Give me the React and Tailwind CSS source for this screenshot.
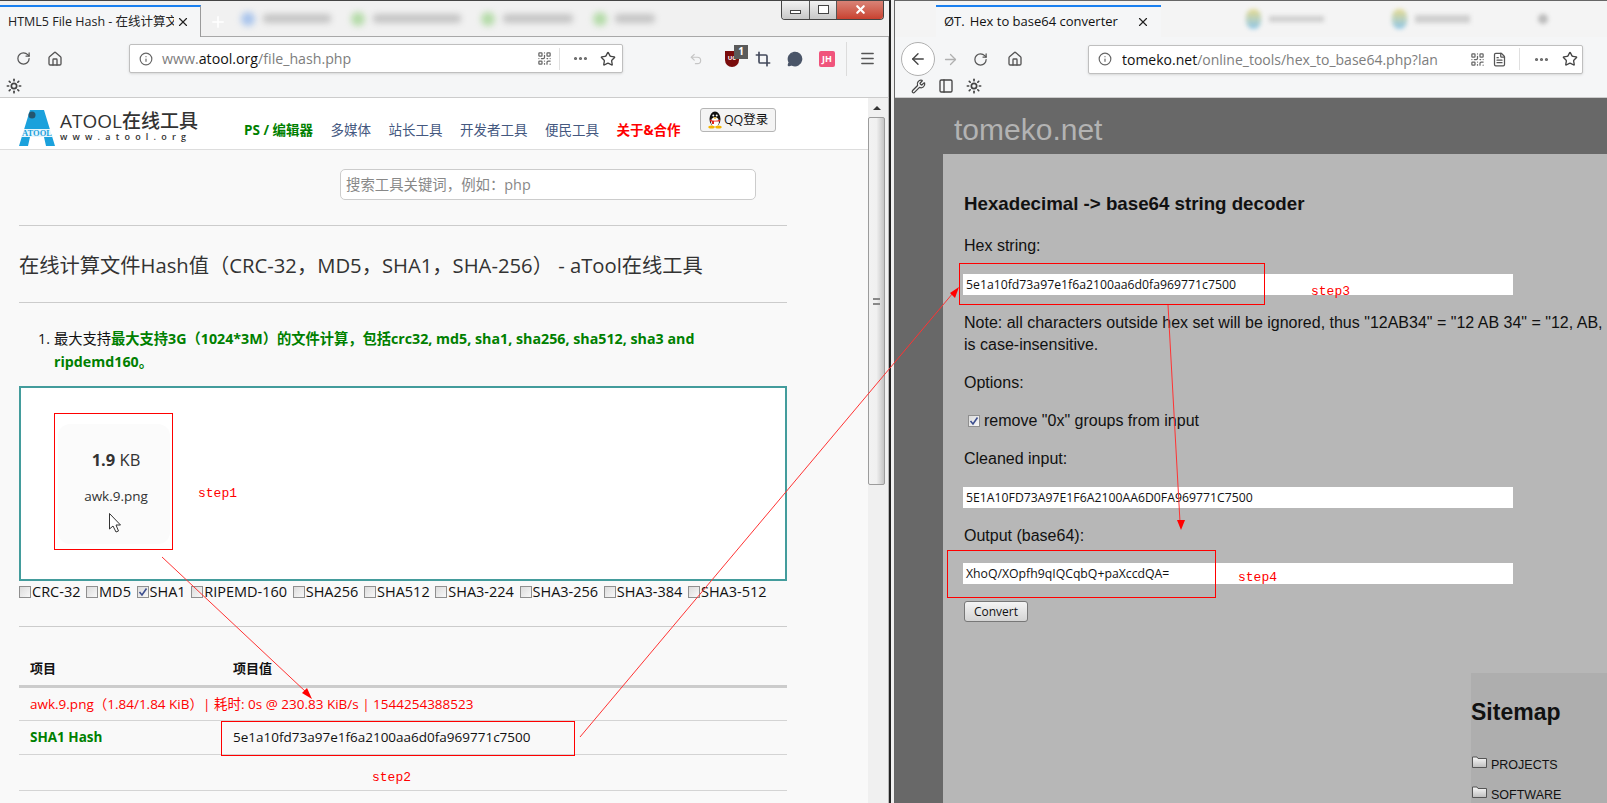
import React from 'react';
import { RotateCw, Home, Info, Star, MoreHorizontal, Sun, Crop, MessageCircle, Menu, ArrowLeft, ArrowRight, Wrench, PanelLeft, FileText, QrCode, Undo2, X, Plus } from 'lucide-react';

function Box({ checked }) {
  return (
    <span className="w-[12px] h-[12px] mr-px border border-[#8f8f8f] bg-gradient-to-br from-[#dcdcdc] to-[#f8f8f8] flex items-center justify-center shrink-0">
      {checked && (
        <svg width="10" height="10" viewBox="0 0 10 10"><path d="M1.5 5 L4 8 L8.5 1.5" fill="none" stroke="#3d4f8f" strokeWidth="1.6" /></svg>
      )}
    </span>
  );
}

function Check({ label, checked }) {
  return (
    <span className="flex items-center mr-[5.6px]">
      <Box checked={checked} />
      {label}
    </span>
  );
}

function BlurTab({ color, w }) {
  return (
    <div className="flex items-center gap-2 blur-[3px] mr-5">
      <span className={`w-[14px] h-[14px] rounded-full ${color}`}></span>
      <span className="h-[9px] bg-[#c4c4c4] rounded-sm" style={{ width: w }}></span>
    </div>
  );
}

function Logo() {
  return (
    <div className="flex items-start h-[51px] pt-[12px]">
      <svg width="36" height="36" viewBox="0 0 36 36">
        <path d="M11 0 H25 L36 36 H27 L25 27 H11 L9 36 H0 Z" fill="#1ba1dc" />
        <circle cx="13" cy="5" r="3.5" fill="#24566f" />
        <rect x="3" y="19" width="30" height="8" fill="#fff" opacity="0.9" />
        <text x="18" y="26" textAnchor="middle" fontSize="8.5" fontWeight="700" fontFamily="Liberation Serif, serif" fill="#1ba1dc">ATOOL</text>
      </svg>
      <div className="ml-[5px] flex flex-col">
        <span className="text-[19px] leading-[22px] text-[#333] font-medium">ATOOL在线工具</span>
        <span className="text-[9px] leading-[10px] text-[#333] tracking-[5.2px] font-semibold">www.atool.org</span>
      </div>
    </div>
  );
}

function Penguin() {
  return (
    <svg width="16" height="18" viewBox="0 0 16 18">
      <ellipse cx="8" cy="8" rx="5.5" ry="7.5" fill="#111" />
      <ellipse cx="8" cy="11" rx="4" ry="4.8" fill="#fff" />
      <circle cx="6.3" cy="4.5" r="1" fill="#fff" />
      <circle cx="9.7" cy="4.5" r="1" fill="#fff" />
      <path d="M6 6.4 H10 L8 8 Z" fill="#f5b400" />
      <path d="M3 8.6 Q8 11 13 8.6 V10.4 H7 V13 H5 V10.4 H3 Z" fill="#e3241b" />
      <ellipse cx="4.5" cy="16" rx="3.2" ry="1.6" fill="#f5b400" />
      <ellipse cx="11.5" cy="16" rx="3.2" ry="1.6" fill="#f5b400" />
    </svg>
  );
}

function LeftWindow() {
  return (
    <div className="w-[891px] h-[803px] shrink-0 flex flex-col border-t border-[#444] overflow-hidden border-r-2 border-r-[#222]">
      {/* tab strip */}
      <div className="h-[36px] flex shrink-0 bg-[#f1f1f1] border-b border-[#a8a8a8]">
        <div className="w-[201px] mt-[4px] bg-[#f5f6f7] border-t-2 border-[#1a80f0] border-r border-r-[#9a9a9a] flex items-center pl-2 pr-[10px] -mb-px">
          <span className="text-[12.5px] text-[#222] w-[166px] whitespace-nowrap overflow-hidden">HTML5 File Hash - 在线计算文</span>
          <X size={14} strokeWidth={2} className="text-[#222] ml-auto" />
        </div>
        <Plus size={18} className="text-white ml-[8px] mt-[12px]" />
        <div className="flex items-center ml-[14px]">
          <BlurTab color="bg-[#a9c4ec]" w={68} />
          <BlurTab color="bg-[#b4dba8]" w={88} />
          <BlurTab color="bg-[#b4dba8]" w={70} />
          <BlurTab color="bg-[#b4dba8]" w={40} />
        </div>
        <div className="ml-auto mr-[5px] -mt-px h-[20px] w-[103px] flex border border-t-0 border-[#444] rounded-b-[4px] overflow-hidden shrink-0">
          <div className="w-[28px] bg-gradient-to-b from-[#f5f5f5] to-[#c8c8c8] flex items-center justify-center border-r border-[#555]">
            <span className="w-[11px] h-[4px] mt-1 bg-white border border-[#444] block"></span>
          </div>
          <div className="w-[27px] bg-gradient-to-b from-[#f5f5f5] to-[#c8c8c8] flex items-center justify-center border-r border-[#555]">
            <span className="w-[11px] h-[9px] bg-white border border-[#444] block"></span>
          </div>
          <div className="flex-1 bg-gradient-to-b from-[#d9867a] to-[#c8402f] flex items-center justify-center">
            <X size={13} strokeWidth={4} className="text-white" />
          </div>
        </div>
      </div>
      {/* toolbar */}
      <div className="h-[61px] shrink-0 bg-[#f5f6f7] border-b border-[#cccccc] flex flex-col pr-[6px] border-r border-r-[#b8b8b8]">
        <div className="flex items-center h-[36px] pt-[7px]">
          <RotateCw size={15} strokeWidth={2} className="text-[#555] ml-[16px]" />
          <Home size={16} strokeWidth={2} className="text-[#555] ml-[16px]" />
          <div className="ml-[66px] w-[494px] h-[29px] bg-white border border-[#bfbfbf] rounded-[2px] flex items-center shadow-sm">
            <Info size={14} className="text-[#666] ml-[9px]" />
            <span className="text-[14.2px] ml-[9px] text-[#7d7d7d] flex-1">www.<span className="text-[#111]">atool.org</span>/file_hash.php</span>
            <QrCode size={15} className="text-[#666]" />
            <span className="w-px h-[22px] bg-[#e0e0e0] ml-[7px]"></span>
            <MoreHorizontal size={17} strokeWidth={2.5} className="text-[#666] ml-[12px]" />
            <Star size={16} strokeWidth={2} className="text-[#444] ml-[11px] mr-[6px]" />
          </div>
          <Undo2 size={14} className="text-[#c5c5c5] ml-[66px]" />
          <div className="relative ml-[22px] w-[14px] h-[16px] bg-[#7a0c0c] rounded-b-[7px] text-[6px] text-white flex items-center justify-center font-bold">
            UC
            <span className="absolute -top-[6px] left-[9px] w-[14px] h-[14px] bg-[#5a5a5a] text-white text-[10px] flex items-center justify-center">1</span>
          </div>
          <Crop size={16} strokeWidth={2.5} className="text-[#434a5c] ml-[16px]" />
          <MessageCircle size={16} fill="#4a5568" className="text-[#4a5568] ml-[16px]" />
          <span className="ml-[16px] w-[16px] h-[16px] bg-[#f0547c] rounded-[2px] text-white text-[9px] font-bold flex items-center justify-center">JH</span>
          <span className="w-px h-[34px] bg-[#dcdcdc] ml-[11px]"></span>
          <Menu size={17} className="text-[#555] ml-[12px]" />
        </div>
        <div className="flex-1 flex items-center pl-[6px] pt-[2px]">
          <Sun size={16} strokeWidth={2.5} className="text-[#444]" />
        </div>
      </div>
      {/* page */}
      <div className="flex-1 flex min-h-0 pr-[5px] border-r border-r-[#b8b8b8]">
        <div className="w-[868px] shrink-0 bg-[#f9f9f9] flex flex-col">
          <div className="h-[52px] shrink-0 bg-white border-b border-[#ddd] flex pl-[19px]">
            <Logo />
            <nav className="flex items-center gap-[17.5px] ml-[46px] h-[51px] pt-[14px] text-[13.5px] text-[#44587f] whitespace-nowrap">
              <span className="font-bold text-[#008000]">PS / 编辑器</span>
              <span>多媒体</span>
              <span>站长工具</span>
              <span>开发者工具</span>
              <span>便民工具</span>
              <span className="font-bold text-[#ff0000]">关于&amp;合作</span>
            </nav>
            <div className="ml-[19px] mt-[10px] w-[76px] h-[24px] bg-[#f4f4f4] border border-[#b5b5b5] rounded-[3px] flex items-center justify-center gap-px text-[12.5px] text-[#111] shrink-0">
              <Penguin />QQ登录
            </div>
          </div>
          <div className="ml-[19px] w-[768px] flex flex-col">
            <div className="ml-[321px] mt-[19px] w-[416px] h-[31px] bg-white border border-[#cccccc] rounded-[5px] flex items-center pl-[5px] text-[14.4px] text-[#888]">搜索工具关键词，例如：php</div>
            <div className="mt-[25px] border-t border-[#cccccc]"></div>
            <h1 className="h-[76px] pt-[3px] flex items-center text-[20.25px] text-[#333] font-normal whitespace-nowrap">在线计算文件Hash值（CRC-32，MD5，SHA1，SHA-256） - aTool在线工具</h1>
            <div className="border-t border-[#cccccc]"></div>
            <div className="mt-[24px] ml-[19px] pl-[16px] h-[59px] relative text-[14.25px] leading-[23px] font-bold text-[#008000] whitespace-nowrap">
              <span className="absolute left-0 top-0 text-[#111] font-normal">1.</span>
              <span className="text-[#111] font-normal">最大支持</span>最大支持3G（1024*3M）的文件计算，包括crc32, md5, sha1, sha256, sha512, sha3 and<br />ripdemd160。
            </div>
            <div className="h-[195px] bg-white border-2 border-[#439c9c] pl-[37px] pt-[36px]">
              <div className="w-[112px] h-[120px] bg-[#fbfbfb] rounded-[12px] flex flex-col items-center pt-[25px] pl-[4px]">
                <div className="text-[16.5px] leading-[22px] text-[#333]"><b>1.9</b> KB</div>
                <div className="text-[13.5px] leading-[18px] text-[#333] mt-[16px]">awk.9.png</div>
              </div>
            </div>
            <div className="flex items-center h-[22px] text-[14.5px] text-[#111] whitespace-nowrap">
              <Check label="CRC-32" />
              <Check label="MD5" />
              <Check label="SHA1" checked />
              <Check label="RIPEMD-160" />
              <Check label="SHA256" />
              <Check label="SHA512" />
              <Check label="SHA3-224" />
              <Check label="SHA3-256" />
              <Check label="SHA3-384" />
              <Check label="SHA3-512" />
            </div>
            <div className="mt-[23px] border-t border-[#cccccc]"></div>
            <div className="h-[51px] flex items-end pb-[7px] text-[13px] font-bold text-[#111] border-b-[3px] border-[#cccccc] box-content">
              <span className="ml-[11px] w-[203px]">项目</span>
              <span>项目值</span>
            </div>
            <div className="h-[32px] flex items-center pl-[11px] text-[13.5px] text-[#ff0000] border-b border-[#d4d4d4] box-content whitespace-nowrap">awk.9.png（1.84/1.84 KiB）| 耗时: 0s @ 230.83 KiB/s | 1544254388523</div>
            <div className="h-[33px] flex items-center text-[13.5px] border-b border-[#d4d4d4] box-content">
              <span className="ml-[11px] w-[203px] font-bold text-[#008000]">SHA1 Hash</span>
              <span className="text-[#111]">5e1a10fd73a97e1f6a2100aa6d0fa969771c7500</span>
            </div>
            <div className="h-[35px] border-b border-[#d4d4d4] box-content"></div>
          </div>
        </div>
        <div className="w-[17px] shrink-0 bg-[#f0f0f0] flex flex-col">
          <div className="h-[19px] flex items-center justify-center shrink-0">
            <span className="w-0 h-0 border-x-[4px] border-x-transparent border-b-[4px] border-b-[#333]"></span>
          </div>
          <div className="h-[368px] bg-gradient-to-r from-[#f2f2f2] via-[#f0f0f0] to-[#c4c4c4] border border-[#9c9c9c] rounded-[2px] flex items-center justify-center">
            <span className="w-[7px] h-[7px] border-y-2 border-[#888]"></span>
          </div>
        </div>
      </div>
    </div>
  );
}

function HexInput({ children, className }) {
  return (
    <div className={`w-[550px] h-[21px] bg-white flex items-center pl-[3px] text-[12.25px] text-[#111] font-['Open_Sans',sans-serif] ${className}`}>{children}</div>
  );
}

function RightWindow() {
  return (
    <div className="flex-1 min-w-0 h-[803px] flex flex-col border-t border-[#666] ml-[3px] border-l border-l-[#666] overflow-hidden font-['Liberation_Sans','Noto_Sans_CJK_SC',sans-serif]">
      <div className="h-[36px] shrink-0 flex bg-[#f4f4f4]">
        <div className="ml-[41px] mt-[4px] w-[225px] bg-[#f5f6f7] border-t-2 border-[#1a80f0] flex items-center pl-2 pr-[11px] font-['Open_Sans',sans-serif]">
          <span className="text-[13px] text-[#111] whitespace-nowrap">ØT.<span className="ml-[5px]">Hex to base64 converter</span></span>
          <X size={14} strokeWidth={2} className="text-[#222] ml-auto" />
        </div>
        <div className="flex items-center ml-[85px] blur-[2px] gap-2">
          <span className="w-[15px] h-[20px] rounded-full bg-gradient-to-b from-[#e5d98a] to-[#8cc5e8]"></span>
          <span className="w-[55px] h-[6px] bg-[#cfcfcf]"></span>
          <span className="ml-[60px] w-[15px] h-[20px] rounded-full bg-gradient-to-b from-[#e5d98a] to-[#8cc5e8]"></span>
          <span className="w-[55px] h-[8px] bg-[#cfcfcf]"></span>
          <span className="ml-[60px] w-[10px] h-[10px] rounded-full bg-[#bbb]"></span>
        </div>
      </div>
      <div className="h-[61px] shrink-0 bg-[#f5f6f7] border-b border-[#cccccc] flex flex-col font-['Open_Sans',sans-serif]">
        <div className="flex items-center h-[38px] pl-[6px] pt-[6px]">
          <span className="w-[34px] h-[34px] rounded-full border border-[#b0b0b0] bg-white flex items-center justify-center shrink-0">
            <ArrowLeft size={18} strokeWidth={1.8} className="text-[#444]" />
          </span>
          <ArrowRight size={17} strokeWidth={1.8} className="text-[#b0b0b0] ml-[7px]" />
          <RotateCw size={15} strokeWidth={2} className="text-[#555] ml-[14px]" />
          <Home size={16} strokeWidth={2} className="text-[#555] ml-[19px]" />
          <div className="ml-[65px] w-[495px] h-[29px] bg-white border border-[#bfbfbf] rounded-[2px] flex items-center shadow-sm shrink-0">
            <Info size={14} className="text-[#666] ml-[9px]" />
            <span className="text-[14px] ml-[10px] text-[#7d7d7d] w-[322px] overflow-hidden whitespace-nowrap"><span className="text-[#111]">tomeko.net</span>/online_tools/hex_to_base64.php?lan</span>
            <QrCode size={15} className="text-[#666] ml-[26px]" />
            <FileText size={15} className="text-[#555] ml-[7px]" />
            <span className="w-px h-[22px] bg-[#e0e0e0] ml-[12px]"></span>
            <MoreHorizontal size={17} strokeWidth={2.5} className="text-[#666] ml-[13px]" />
            <Star size={16} strokeWidth={2} className="text-[#444] ml-[12px]" />
          </div>
        </div>
        <div className="flex-1 flex items-center pl-[16px] gap-[12px]">
          <Wrench size={15} strokeWidth={2} className="text-[#444]" />
          <PanelLeft size={16} strokeWidth={2} className="text-[#444]" />
          <Sun size={16} strokeWidth={2.5} className="text-[#444]" />
        </div>
      </div>
      <div className="flex-1 min-h-0 bg-[#686868] flex flex-col">
        <div className="h-[56px] shrink-0 pl-[59px] pt-[14px] text-[30px] leading-[36px] text-[#b3b3b3]">tomeko.net</div>
        <div className="flex-1 ml-[48px] bg-[#b7b7b7] pl-[21px] pt-[39px] text-[16px] leading-[22px] text-[#111] flex flex-col overflow-hidden">
          <h2 className="text-[18.72px] font-bold leading-[22px]">Hexadecimal -&gt; base64 string decoder</h2>
          <p className="mt-[20px]">Hex string:</p>
          <HexInput className="mt-[17px] -ml-px">5e1a10fd73a97e1f6a2100aa6d0fa969771c7500</HexInput>
          <p className="mt-[17px] whitespace-nowrap">Note: all characters outside hex set will be ignored, thus "12AB34" = "12 AB 34" = "12, AB, 34"</p>
          <p>is case-insensitive.</p>
          <p className="mt-[16px]">Options:</p>
          <p className="mt-[16px] flex items-center ml-[4px]"><Box checked /><span className="ml-[3px]">remove "0x" groups from input</span></p>
          <p className="mt-[16px]">Cleaned input:</p>
          <HexInput className="mt-[17px] -ml-px">5E1A10FD73A97E1F6A2100AA6D0FA969771C7500</HexInput>
          <p className="mt-[17px]">Output (base64):</p>
          <HexInput className="mt-[16px] -ml-px">XhoQ/XOpfh9qIQCqbQ+paXccdQA=</HexInput>
          <div className="mt-[17px] w-[64px] h-[21px] bg-gradient-to-b from-[#f4f4f4] to-[#d4d4d4] border border-[#777] rounded-[3px] flex items-center justify-center text-[12px] font-['Open_Sans',sans-serif]">Convert</div>
          <div className="mt-[51px] self-end w-[136px] flex-1 bg-[#aeaeae] text-[12.5px] leading-[16px]">
            <div className="text-[23px] leading-[26px] font-bold mt-[26px]">Sitemap</div>
            <div className="flex items-end mt-[31px] ml-[1px]"><Folder /><span className="ml-[4px] -mb-[5px]">PROJECTS</span></div>
            <div className="flex items-end mt-[18px] ml-[1px]"><Folder /><span className="ml-[4px] -mb-[5px]">SOFTWARE</span></div>
          </div>
        </div>
      </div>
    </div>
  );
}

function Folder() {
  return (
    <svg width="15" height="12" viewBox="0 0 15 12">
      <defs>
        <linearGradient id="fg" x1="0" y1="0" x2="0" y2="1"><stop offset="0" stopColor="#fafafa" /><stop offset="1" stopColor="#bdbdbd" /></linearGradient>
      </defs>
      <path d="M0.5 11.5 V1 H5 L6 2.5 H14.5 V11.5 Z" fill="url(#fg)" stroke="#555" />
    </svg>
  );
}

function Rect({ className }) {
  return <div className={`absolute border border-[#ff0000] pointer-events-none ${className}`}></div>;
}

function Step({ className, children }) {
  return <span className={`absolute text-[13px] leading-[14px] text-[#ff0000] font-['Liberation_Mono',monospace] ${className}`}>{children}</span>;
}

export default function App() {
  return (
    <div className="relative w-[1607px] h-[803px] overflow-hidden bg-[#f0f0f0] flex font-['Open_Sans','Noto_Sans_CJK_SC',sans-serif]">
      <LeftWindow />
      <RightWindow />
      <Rect className="left-[54px] top-[413px] w-[119px] h-[137px]" />
      <Rect className="left-[221px] top-[721px] w-[354px] h-[35px]" />
      <Rect className="left-[959px] top-[263px] w-[306px] h-[42px]" />
      <Rect className="left-[947px] top-[550px] w-[269px] h-[48px]" />
      <Step className="left-[198px] top-[487px]">step1</Step>
      <Step className="left-[372px] top-[771px]">step2</Step>
      <Step className="left-[1311px] top-[285px]">step3</Step>
      <Step className="left-[1238px] top-[571px]">step4</Step>
      <svg className="absolute left-0 top-0 pointer-events-none" width="1607" height="803">
        <line x1="162" y1="557" x2="306" y2="692" stroke="#ff3333" strokeWidth="1" />
        <path d="M312 699 L302 693 L307 688 Z" fill="#ff0000" />
        <line x1="580" y1="737" x2="953" y2="293" stroke="#ff3333" strokeWidth="1" />
        <path d="M959 287 L955 298 L950 293 Z" fill="#ff0000" />
        <line x1="1168" y1="305" x2="1180" y2="522" stroke="#ff3333" strokeWidth="1" />
        <path d="M1181 530 L1177 520 L1185 520 Z" fill="#ff0000" />
        <path d="M109.5 513.5 V529 L113 526 L116 532 L118.5 531 L116 525 L120.5 525 Z" fill="#fff" stroke="#333" strokeWidth="1" />
      </svg>
    </div>
  );
}
